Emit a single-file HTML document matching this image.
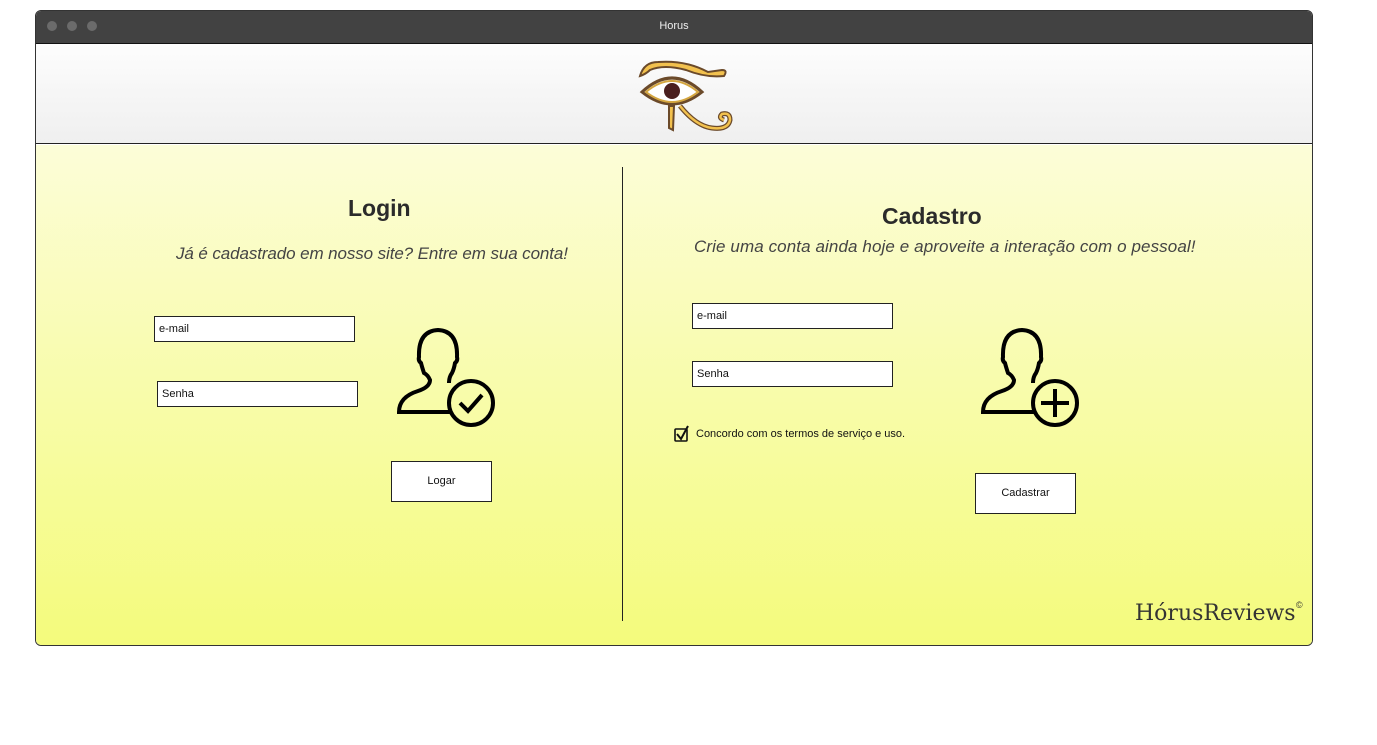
<!DOCTYPE html>
<html><head><meta charset="utf-8"><style>
*{margin:0;padding:0;box-sizing:border-box}
body{width:1377px;height:745px;background:#fff;position:relative;overflow:hidden;font-family:"Liberation Sans",sans-serif;color:#333}
.win{position:absolute;left:35px;top:10px;width:1278px;height:636px;border:1px solid #333;border-radius:6px;overflow:hidden}
.bar{position:absolute;left:0;top:0;right:0;height:33px;background:#424242;border-bottom:1px solid #111}
.dot{position:absolute;top:10px;width:10px;height:10px;border-radius:50%;background:#6b6b6b}
.bar .t{position:absolute;left:0;right:0;top:9px;text-align:center;color:#eee;font-size:11px}
.hdr{position:absolute;left:0;right:0;top:33px;height:100px;background:linear-gradient(#fdfdfd,#efefef);border-bottom:1px solid #222}
.main{position:absolute;left:0;right:0;top:134px;bottom:0;background:linear-gradient(#fcfdd8,#f4fb7c)}
.a{position:absolute}
.in{position:absolute;height:26px;background:#fff;border:1px solid #222;font-size:11px;padding:6px 4px 0;color:#111}
.btn{position:absolute;width:101px;height:41px;background:#fff;border:1px solid #222;font-size:11px;text-align:center;line-height:39px;color:#111}
h2{position:absolute;font-size:23px;font-weight:bold;color:#2b2b2b}
.it{position:absolute;font-style:italic;font-size:17px;color:#444;white-space:nowrap}
</style></head><body>
<div class="win">
<div class="bar"><div class="dot" style="left:11px"></div><div class="dot" style="left:31px"></div><div class="dot" style="left:51px"></div><div class="t">Horus</div></div>
<div class="hdr">
<svg class="a" style="left:600px;top:12px" width="100" height="78" viewBox="0 0 100 78">
<path d="M4 20 Q8 6 22 6 Q50 4 72 16 L86 14 Q92 14 88 20 Q70 22 50 14 Q28 8 14 14 Q10 18 4 20Z" fill="#f2c14e" stroke="#6b4a2a" stroke-width="2"/>
<path d="M6 36 Q36 8 66 36 Q36 60 6 36Z" fill="#f5f0e0" stroke="#6b4a2a" stroke-width="3"/>
<path d="M10 36 Q36 14 62 36 Q36 56 10 36Z" fill="#fff" stroke="#d4a640" stroke-width="2"/>
<circle cx="36" cy="35" r="8" fill="#4a1f1f"/>
<path d="M33 50 L33 72 L37 74 L38 50Z" fill="#f2c14e" stroke="#6b4a2a" stroke-width="2"/>
<path d="M44 50 Q60 70 76 72 Q92 74 94 64 Q94 56 86 58 Q82 62 88 64" fill="none" stroke="#6b4a2a" stroke-width="5"/>
<path d="M44 50 Q60 70 76 72 Q92 74 94 64 Q94 56 86 58 Q82 62 88 64" fill="none" stroke="#f2c14e" stroke-width="2.5"/>
</svg>
</div>
<div class="main">
<div class="a" style="left:586px;top:22px;width:1px;height:454px;background:#222"></div>
<h2 style="left:312px;top:50px">Login</h2>
<div class="it" style="left:140px;top:99px;letter-spacing:-0.1px">Já é cadastrado em nosso site? Entre em sua conta!</div>
<div class="in" style="left:118px;top:171px;width:201px">e-mail</div>
<div class="in" style="left:121px;top:236px;width:201px">Senha</div>
<svg class="a" style="left:358px;top:180px" width="104" height="104" viewBox="0 0 104 104" fill="none" stroke="#000" stroke-width="4">
<path d="M56 87 H5 Q5 72 24 66 Q36 62 36 55 Q34 50 30 48 Q28 42 27 38 Q24 36 25 32 Q24 6 44 5 Q64 6 63 32 Q64 36 61 38 Q60 44 58 48 Q55 52 55 58"/>
<circle cx="77" cy="78" r="22"/><path d="M66 78 L74 86 L88 70"/>
</svg>
<div class="btn" style="left:355px;top:316px">Logar</div>
<h2 style="left:846px;top:58px">Cadastro</h2>
<div class="it" style="left:658px;top:92px;letter-spacing:0.1px">Crie uma conta ainda hoje e aproveite a interação com o pessoal!</div>
<div class="in" style="left:656px;top:158px;width:201px">e-mail</div>
<div class="in" style="left:656px;top:216px;width:201px">Senha</div>
<svg class="a" style="left:638px;top:280px" width="16" height="18" viewBox="0 0 16 18" fill="none" stroke="#111" stroke-width="1.6"><rect x="1" y="4" width="12" height="12" rx="1"/><path d="M3 9 L7 14 L14 1" stroke-width="2"/></svg>
<div class="a" style="left:660px;top:283px;font-size:11px;color:#111">Concordo com os termos de serviço e uso.</div>
<svg class="a" style="left:942px;top:180px" width="104" height="104" viewBox="0 0 104 104" fill="none" stroke="#000" stroke-width="4">
<path d="M56 87 H5 Q5 72 24 66 Q36 62 36 55 Q34 50 30 48 Q28 42 27 38 Q24 36 25 32 Q24 6 44 5 Q64 6 63 32 Q64 36 61 38 Q60 44 58 48 Q55 52 55 58"/>
<circle cx="77" cy="78" r="22"/><path d="M77 64 V92 M63 78 H91"/>
</svg>
<div class="btn" style="left:939px;top:328px">Cadastrar</div>
<div class="a" style="left:1099px;top:456px;font-family:'DejaVu Serif',serif;font-size:22px;color:#333;white-space:nowrap">HórusReviews</div>
<div class="a" style="left:1260px;top:455px;font-size:9px">©</div>
</div>
</div>
</body></html>
